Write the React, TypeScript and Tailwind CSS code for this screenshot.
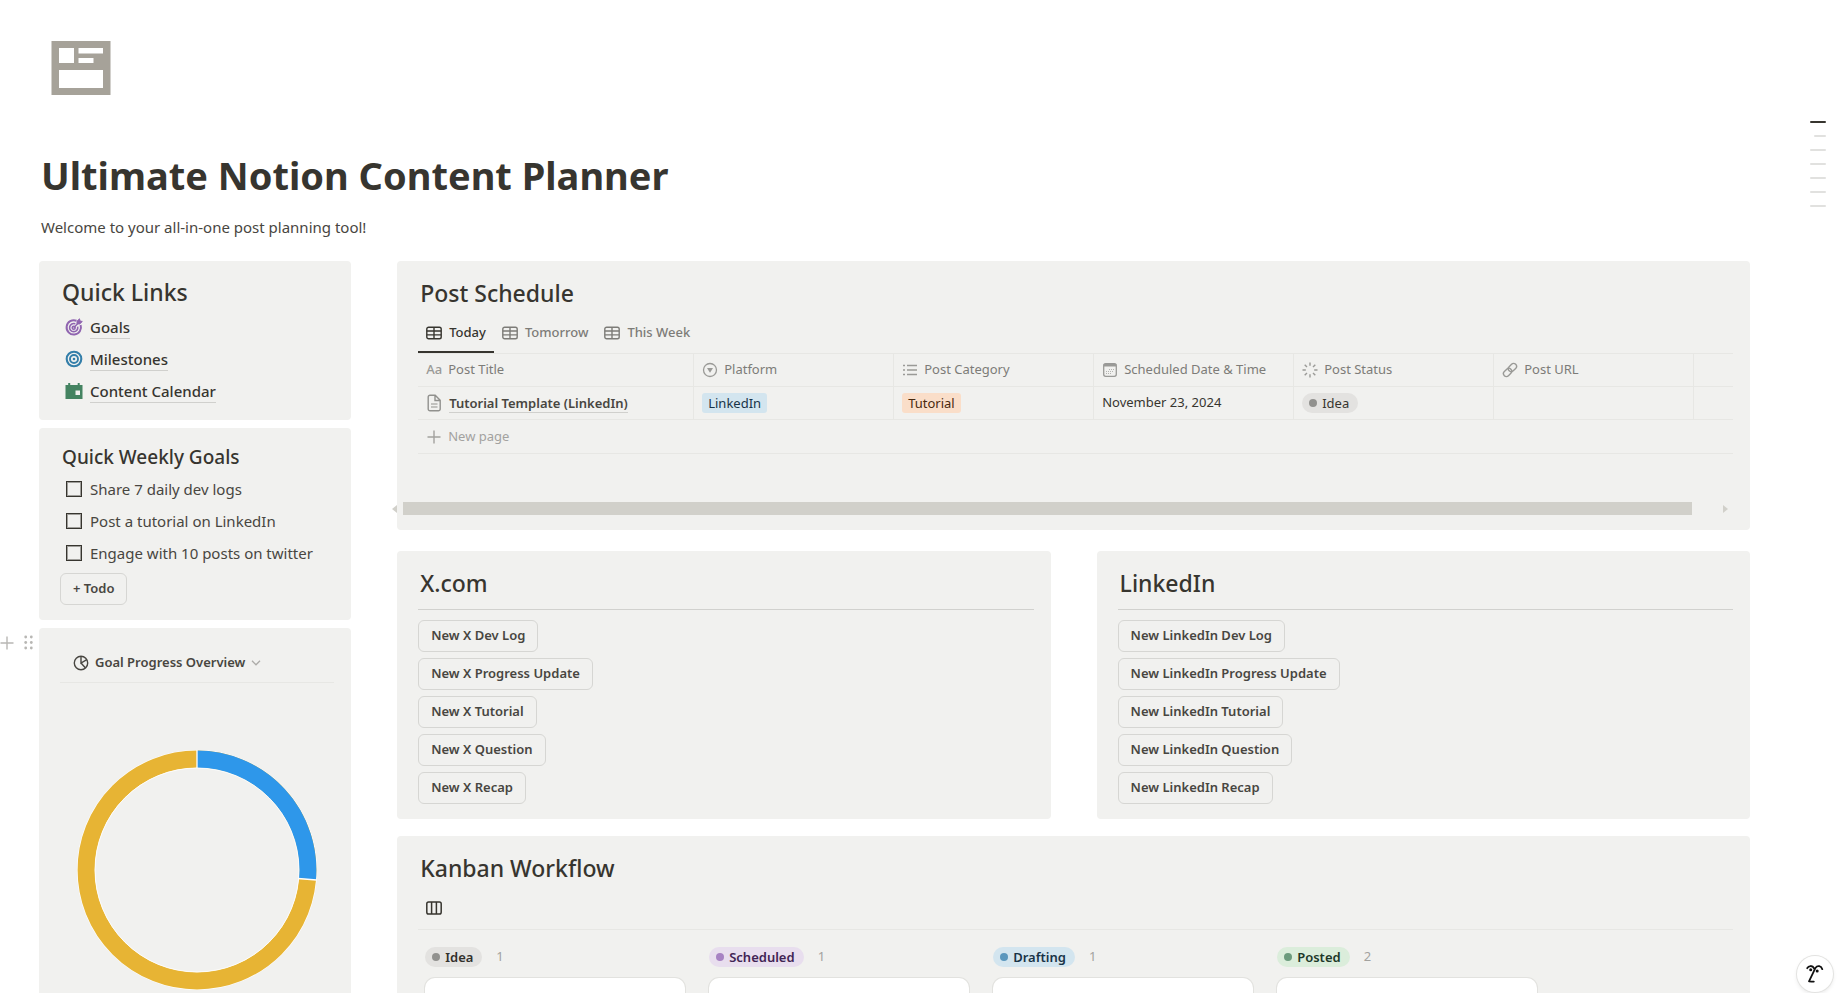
import React, { useState } from 'react';

const Card: React.FC<{ className?: string; children: React.ReactNode }> = ({ className = '', children }) => (
  <section className={`relative rounded bg-[#f1f1ef] pl-[21px] pr-[17px] ${className}`}>{children}</section>
);

const Heading: React.FC<{ children: React.ReactNode }> = ({ children }) => (
  <h2 className="px-[2px] text-[23px] leading-[38px] font-medium">{children}</h2>
);

const OutlineButton: React.FC<{ children: React.ReactNode }> = ({ children }) => (
  <button
    type="button"
    className="h-8 rounded-md border border-[#d6d6d3] px-3 text-[13px] font-semibold whitespace-nowrap text-[#484641] hover:bg-[#e8e8e6]"
  >
    {children}
  </button>
);

/* ---------- icons ---------- */

const PageIcon = () => (
  <svg width="60" height="54" viewBox="0 0 60 54" aria-hidden="true">
    <path
      fill="#a6a299"
      fillRule="evenodd"
      d="M0.5 0h59v54h-59zM8 7v15h15V7zM27.500 7v5.500h24.500V7zM27.500 17v5h15v-5zM8 29v18h44V29z"
    />
  </svg>
);

const GoalIcon = () => (
  <svg width="18" height="18" viewBox="0 0 18 18" fill="none" stroke="#9065b0" aria-hidden="true">
    <path d="M11.500 2.700A7.200 7.200 0 1 0 15.600 7" strokeWidth="2" />
    <path d="M10.300 5.800A4.100 4.100 0 1 0 12.700 8.700" strokeWidth="1.600" />
    <circle cx="8.700" cy="9.700" r="1.500" strokeWidth="1.500" />
    <path d="M8.700 9.700L14 4.300" strokeWidth="1.500" />
    <path d="M12 5.900V3.200L14.500 0.800l.5 2.200 2.300.5-2.500 2.400z" fill="#9065b0" strokeWidth="1" />
  </svg>
);

const MilestoneIcon = () => (
  <svg width="18" height="18" viewBox="0 0 18 18" fill="none" stroke="#337ea9" aria-hidden="true">
    <circle cx="9" cy="9" r="7.300" strokeWidth="2.100" />
    <circle cx="9" cy="9" r="4" strokeWidth="1.900" />
    <circle cx="9" cy="9" r="1.300" fill="#337ea9" stroke="none" />
  </svg>
);

const CalendarIcon = () => (
  <svg width="18" height="18" viewBox="0 0 18 18" fill="#448361" aria-hidden="true">
    <path fillRule="evenodd" d="M.5 3h2.700V1h2v2h7.500V1h2v2h2.800v14H.5zM10.500 8.500v4.500h4.500V8.500z" />
  </svg>
);

const TableIcon = () => (
  <svg width="16" height="14" viewBox="0 0 16 14" fill="none" stroke="currentColor" strokeWidth="1.400" aria-hidden="true">
    <rect x=".8" y="1.200" width="14.400" height="11.600" rx="1.800" />
    <path d="M8 1.200v11.600M.8 5h14.400M.8 8.900h14.400" />
  </svg>
);

const BoardIcon = () => (
  <svg width="16" height="16" viewBox="0 0 16 16" fill="none" stroke="currentColor" strokeWidth="1.500" aria-hidden="true">
    <rect x=".8" y="2" width="14.400" height="12" rx="1.800" />
    <path d="M5.600 2v12M10.400 2v12" />
  </svg>
);

const PieIcon = () => (
  <svg width="16" height="16" viewBox="0 0 16 16" fill="none" stroke="currentColor" strokeWidth="1.400" aria-hidden="true">
    <circle cx="8" cy="8" r="6.700" />
    <path d="M8 1.300V8l5.800-3.300M8 8l4.500 5" />
  </svg>
);

const SelectIcon = () => (
  <svg width="16" height="16" viewBox="0 0 16 16" fill="none" stroke="currentColor" strokeWidth="1.300" aria-hidden="true">
    <circle cx="8" cy="8" r="6.500" />
    <path d="M5 6h6L8 10.800z" fill="currentColor" stroke="none" />
  </svg>
);

const ListIcon = () => (
  <svg width="16" height="16" viewBox="0 0 16 16" stroke="currentColor" strokeWidth="1.300" aria-hidden="true">
    <path d="M1 3.500h2M1 8h2M1 12.500h2M5 3.500h10M5 8h10M5 12.500h10" />
  </svg>
);

const DateIcon = () => (
  <svg width="16" height="16" viewBox="0 0 16 16" fill="none" stroke="currentColor" strokeWidth="1.300" aria-hidden="true">
    <rect x="1.700" y="1.700" width="12.600" height="12.600" rx="2" />
    <path d="M1.700 3.200h12.600" strokeWidth="2.600" />
    <path d="M7 7.500h5M4 9.500h8M4 11.500h5.500" strokeWidth="1" strokeDasharray="1 1" opacity=".7" />
  </svg>
);

const StatusIcon = () => (
  <svg width="16" height="16" viewBox="0 0 16 16" stroke="currentColor" strokeWidth="1.400" aria-hidden="true">
    <path d="M8 .5v3.300M8 12.200v3.300M.5 8h3.300M12.200 8h3.300M2.700 2.700L5 5M11 11l2.300 2.300M2.700 13.300L5 11M11 5l2.300-2.300" />
  </svg>
);

const UrlIcon = () => (
  <svg width="16" height="16" viewBox="0 0 16 16" fill="none" stroke="currentColor" strokeWidth="1.400" aria-hidden="true">
    <rect x="-4.600" y="-2.900" width="9.200" height="5.800" rx="2.900" transform="translate(5.600 10.400) rotate(-45)" />
    <rect x="-4.600" y="-2.900" width="9.200" height="5.800" rx="2.900" transform="translate(10.400 5.600) rotate(-45)" />
  </svg>
);

const DocIcon = () => (
  <svg width="16" height="18" viewBox="0 0 16 18" fill="none" stroke="#91918e" strokeWidth="1.400" aria-hidden="true">
    <path d="M4 1.200h5.200l5 5v8.800a1.800 1.800 0 0 1-1.800 1.800H4A1.800 1.800 0 0 1 2.200 15V3A1.800 1.800 0 0 1 4 1.200zM9 1.500v5h5" />
    <path d="M5 10h6.500M5 13h6.500" strokeWidth="1.200" />
  </svg>
);

const PlusIcon = () => (
  <svg width="14" height="14" viewBox="0 0 14 14" stroke="currentColor" strokeWidth="1.400" aria-hidden="true">
    <path d="M7 .5v13M.5 7h13" />
  </svg>
);

const FaceIcon = () => (
  <svg width="20" height="22" viewBox="0 0 20 22" fill="none" stroke="#111" strokeWidth="1.800" strokeLinecap="round" aria-hidden="true">
    <path d="M2.200 5.200C3.500 2.500 7.500 2 9.200 5.500" />
    <path d="M17.300 6.200C16.300 2.800 12.500 2 10.600 4.700L4 18.300c1.700.2 3.300.3 4.800.3" strokeLinejoin="round" />
    <circle cx="5.700" cy="6.800" r="1.500" fill="#111" stroke="none" />
    <circle cx="12.200" cy="7.900" r="1.500" fill="#111" stroke="none" />
  </svg>
);

/* ---------- data ---------- */

const quickLinks = [
  { label: 'Goals', icon: <GoalIcon /> },
  { label: 'Milestones', icon: <MilestoneIcon /> },
  { label: 'Content Calendar', icon: <CalendarIcon /> },
];

const weeklyGoals = ['Share 7 daily dev logs', 'Post a tutorial on LinkedIn', 'Engage with 10 posts on twitter'];

const tabs = ['Today', 'Tomorrow', 'This Week'];

const columns = [
  { label: 'Post Title', icon: <span className="text-[13px] font-medium">Aa</span> },
  { label: 'Platform', icon: <SelectIcon /> },
  { label: 'Post Category', icon: <ListIcon /> },
  { label: 'Scheduled Date & Time', icon: <DateIcon /> },
  { label: 'Post Status', icon: <StatusIcon /> },
  { label: 'Post URL', icon: <UrlIcon /> },
];

const templates = ['Dev Log', 'Progress Update', 'Tutorial', 'Question', 'Recap'];

const board = [
  { label: 'Idea', count: 1, pill: 'bg-[#e3e2e0] text-[#32302c]', dot: 'bg-[#91918e]' },
  { label: 'Scheduled', count: 1, pill: 'bg-[#e8deee] text-[#412454]', dot: 'bg-[#a782c3]' },
  { label: 'Drafting', count: 1, pill: 'bg-[#d3e5ef] text-[#183347]', dot: 'bg-[#5b97bd]' },
  { label: 'Posted', count: 2, pill: 'bg-[#dbeddb] text-[#1c3829]', dot: 'bg-[#6c9b7d]' },
];

const outline = [1, 2, 1, 1, 1, 1, 1];

/* ---------- sections ---------- */

const WeeklyGoals = () => {
  const [done, setDone] = useState<string[]>([]);
  const toggle = (goal: string) =>
    setDone((d) => (d.includes(goal) ? d.filter((g) => g !== goal) : [...d, goal]));

  return (
    <Card className="pt-[13px] pb-[15px]">
      <h3 className="px-[2px] text-[19px] leading-8 font-medium">Quick Weekly Goals</h3>
      <ul className="mb-1">
        {weeklyGoals.map((goal) => (
          <li key={goal}>
            <label className="flex h-8 items-center gap-2 pl-[6px] text-[15px] whitespace-nowrap text-[#484641]">
              <input
                type="checkbox"
                checked={done.includes(goal)}
                onChange={() => toggle(goal)}
                className="size-4 shrink-0 appearance-none border border-[#37352f] shadow-[inset_0_0_0_1px_#a09f9b] checked:bg-[#2383e2]"
              />
              {goal}
            </label>
          </li>
        ))}
      </ul>
      <OutlineButton>+ Todo</OutlineButton>
    </Card>
  );
};

const GoalProgress = () => (
  <Card className="pt-[15px] pb-24">
    <div className="absolute top-[7px] -left-[39px] flex items-center gap-[10px] text-[#b8b7b4]">
      <button type="button" aria-label="Add block">
        <PlusIcon />
      </button>
      <button type="button" aria-label="Drag block">
        <svg width="10" height="16" viewBox="0 0 10 16" fill="currentColor" aria-hidden="true">
          <circle cx="1.700" cy="2" r="1.400" /><circle cx="7.300" cy="2" r="1.400" />
          <circle cx="1.700" cy="7.500" r="1.400" /><circle cx="7.300" cy="7.500" r="1.400" />
          <circle cx="1.700" cy="13" r="1.400" /><circle cx="7.300" cy="13" r="1.400" />
        </svg>
      </button>
    </div>
    <div className="flex h-10 border-b border-[#e7e7e4]">
      <button
        type="button"
        className="flex items-center gap-[6px] pl-[13px] text-[13px] font-semibold whitespace-nowrap text-[#484641]"
      >
        <PieIcon />
        Goal Progress Overview
        <svg width="10" height="6" viewBox="0 0 10 6" fill="none" stroke="#acaba8" strokeWidth="1.300" aria-hidden="true">
          <path d="M1 .8l4 4 4-4" />
        </svg>
      </button>
    </div>
    <svg className="mx-auto mt-[67px] block" width="240" height="240" viewBox="0 0 240 240" role="img" aria-label="Goal progress">
      <circle cx="120" cy="120" r="120" fill="#fff" />
      <circle cx="120" cy="120" r="110.800" fill="none" stroke="#e7b434" strokeWidth="17.200" />
      <path d="M120 9.200A110.800 110.800 0 0 1 230.430 129" fill="none" stroke="#2e97ea" strokeWidth="17.200" />
      <path d="M120 0V20M221 128.500L239.500 130" stroke="#fff" strokeWidth="1.300" />
      <circle cx="120" cy="120" r="102" fill="#f1f1ef" stroke="#fff" strokeWidth=".8" />
    </svg>
  </Card>
);

const PostSchedule = () => {
  const [active, setActive] = useState('Today');

  return (
    <Card className="pt-[13px] pb-[15px]">
      <Heading>Post Schedule</Heading>
      <div className="flex h-[42px] border-b border-[#e7e7e4]" role="tablist">
        {tabs.map((tab) => (
          <button
            key={tab}
            type="button"
            role="tab"
            aria-selected={tab === active}
            onClick={() => setActive(tab)}
            className={`flex items-center gap-[7px] border-b-2 px-2 pt-[2px] text-[13px] font-medium ${
              tab === active ? 'border-[#37352f]' : 'border-transparent text-[#7d7c78]'
            }`}
          >
            <TableIcon />
            {tab}
          </button>
        ))}
      </div>

      <table className="w-full table-fixed border-separate border-spacing-0 text-left text-[13px]">
        <colgroup>
          <col className="w-[276px]" />
          <col className="w-[200px]" />
          <col className="w-[200px]" />
          <col className="w-[200px]" />
          <col className="w-[200px]" />
          <col className="w-[200px]" />
          <col />
        </colgroup>
        <thead className="text-[#7d7c78]">
          <tr>
            {columns.map((c) => (
              <th key={c.label} scope="col" className="h-[33px] border-r border-b border-[#e7e7e4] px-2 font-normal">
                <div className="flex items-center gap-[6px] whitespace-nowrap">
                  <span className="flex w-4 justify-center text-[#9a9a97]">{c.icon}</span>
                  {c.label}
                </div>
              </th>
            ))}
            <td className="border-b border-[#e7e7e4]" />
          </tr>
        </thead>
        <tbody>
          <tr className="[&>td]:h-[33px] [&>td]:border-b [&>td]:border-[#e7e7e4] [&>td]:px-2 [&>td:not(:last-child)]:border-r">
            <td>
              <div className="flex items-center gap-[7px]">
                <DocIcon />
                <a
                  href="#tutorial-template"
                  className="border-b border-[#d0d0cd] leading-[18px] font-semibold whitespace-nowrap text-[#484641]"
                >
                  Tutorial Template (LinkedIn)
                </a>
              </div>
            </td>
            <td>
              <span className="inline-block rounded-[3px] bg-[#d3e5ef] px-[6px] leading-5 text-[#183347]">LinkedIn</span>
            </td>
            <td>
              <span className="inline-block rounded-[3px] bg-[#fadec9] px-[6px] leading-5 text-[#49290e]">Tutorial</span>
            </td>
            <td>November 23, 2024</td>
            <td>
              <span className="inline-flex items-center gap-[5px] rounded-full bg-[#e3e2e0] pr-[9px] pl-[7px] leading-5">
                <span className="size-2 rounded-full bg-[#91918e]" />
                Idea
              </span>
            </td>
            <td />
            <td />
          </tr>
        </tbody>
      </table>
      <button
        type="button"
        className="flex h-[34px] w-full items-center gap-[7px] border-b border-[#e7e7e4] pl-[9px] text-[13px] text-[#a3a29f]"
      >
        <PlusIcon />
        New page
      </button>

      <div className="mt-12 mr-[5px] -ml-[26px] flex items-center" aria-hidden="true">
        <svg width="5" height="8" viewBox="0 0 5 8" fill="#d1d0ca"><path d="M5 0v8L0 4z" /></svg>
        <div className="mr-[31px] ml-[6px] h-[13px] flex-1 bg-[#d1d0ca]" />
        <svg width="5" height="8" viewBox="0 0 5 8" fill="#d1d0ca"><path d="M0 0v8l5-4z" /></svg>
      </div>
    </Card>
  );
};

const TemplateCard: React.FC<{ title: string; prefix: string }> = ({ title, prefix }) => (
  <Card className="pt-[13px] pb-[15px]">
    <Heading>{title}</Heading>
    <hr className="mt-[7px] mb-[10px] border-[#d1d1ce]" />
    <div className="flex flex-col items-start gap-[6px]">
      {templates.map((t) => (
        <OutlineButton key={t}>{`New ${prefix} ${t}`}</OutlineButton>
      ))}
    </div>
  </Card>
);

const Kanban = () => (
  <Card className="pt-[13px] pb-[15px]">
    <Heading>Kanban Workflow</Heading>
    <div className="flex h-[43px] items-center border-b border-[#e7e7e4] pl-2">
      <button type="button" aria-label="Board view">
        <BoardIcon />
      </button>
    </div>
    <div className="mt-[17px] flex gap-6 pl-[7px]">
      {board.map((col) => (
        <div key={col.label} className="w-[260px] shrink-0">
          <div className="flex items-center gap-[14px] text-[13px]">
            <span className={`inline-flex items-center gap-[5px] rounded-full pr-[9px] pl-[7px] leading-5 font-semibold ${col.pill}`}>
              <span className={`size-2 rounded-full ${col.dot}`} />
              {col.label}
            </span>
            <span className="text-[#a3a29f]">{col.count}</span>
          </div>
          <div className="mt-[11px] h-28 rounded-[10px] bg-white shadow-[0_0_0_1px_#e2e2df]" />
        </div>
      ))}
    </div>
  </Card>
);

export default function App() {
  return (
    <div className="relative h-screen overflow-hidden bg-white font-['Noto_Sans','Segoe_UI',sans-serif] text-[#37352f]">
      <main className="pt-[41px] pr-[94px] pl-[39px]">
        <header className="mb-[18px]">
          <div className="ml-3">
            <PageIcon />
          </div>
          <h1 className="mt-14 ml-[2px] text-[38px] leading-12 font-bold">Ultimate Notion Content Planner</h1>
          <p className="mt-3 ml-[2px] text-[15px] leading-8 text-[#484641]">Welcome to your all-in-one post planning tool!</p>
        </header>

        <div className="grid grid-cols-[3fr_13fr] gap-[46px]">
          <div className="flex min-w-0 flex-col gap-2">
            <Card className="pt-3 pb-[13px]">
              <Heading>Quick Links</Heading>
              <ul>
                {quickLinks.map((l) => (
                  <li key={l.label} className="flex h-8 items-center gap-[7px] pl-[5px]">
                    {l.icon}
                    <a href="#" className="border-b border-[#d0d0cd] text-[15px] leading-[22px] font-medium">
                      {l.label}
                    </a>
                  </li>
                ))}
              </ul>
            </Card>
            <WeeklyGoals />
            <GoalProgress />
          </div>

          <div className="min-w-0">
            <PostSchedule />
            <div className="mt-[21px] mb-[17px] grid grid-cols-2 gap-[46px]">
              <TemplateCard title="X.com" prefix="X" />
              <TemplateCard title="LinkedIn" prefix="LinkedIn" />
            </div>
            <Kanban />
          </div>
        </div>
      </main>

      <nav className="absolute top-[121px] right-[18px] flex flex-col items-end gap-3" aria-label="Page outline">
        {outline.map((level, i) => (
          <span
            key={i}
            className={`h-[2px] rounded-sm ${level === 1 ? 'w-4' : 'w-3'} ${i === 0 ? 'bg-[#37352f]' : 'bg-[#e1e1df]'}`}
          />
        ))}
      </nav>

      <button
        type="button"
        aria-label="Open assistant"
        className="absolute right-[11px] bottom-px flex size-9 items-center justify-center rounded-full bg-white shadow-[0_0_0_1px_#e3e3e1,0_2px_4px_rgba(15,15,15,0.1)]"
      >
        <FaceIcon />
      </button>
    </div>
  );
}
